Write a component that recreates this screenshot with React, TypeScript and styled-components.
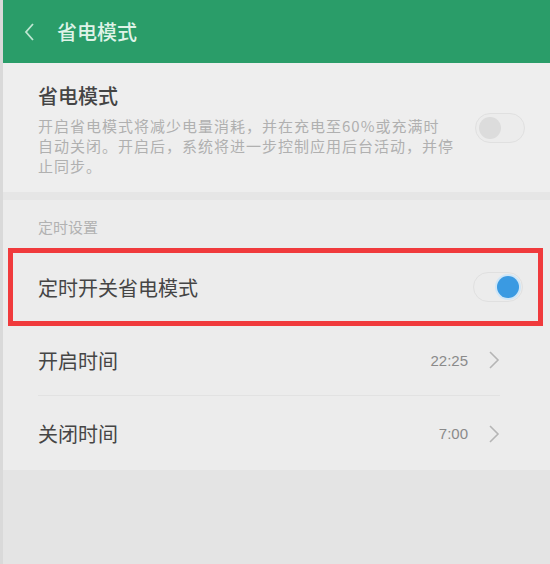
import styled, { createGlobalStyle } from 'styled-components';

const GlobalStyle = createGlobalStyle`
    html, body {
        margin: 0;
        padding: 0;
        background: #e4e4e4;
    }
    body {
        font-family: "Noto Sans CJK SC", "Noto Sans", sans-serif;
    }
`;

const Switch = ({ on }: { on: boolean }) => (
    <Style.Track $on={on}>
        <Style.Knob $on={on} />
    </Style.Track>
);

const Chevron = () => (
    <svg width="12" height="20" viewBox="0 0 12 20">
        <polyline points="2,2 10,10 2,18" fill="none" stroke="#b5b5b5" strokeWidth="1.6" />
    </svg>
);

const App = () => {
    return (
        <Style.Page>
            <GlobalStyle />
            <Style.Header>
                <svg width="14" height="20" viewBox="0 0 14 20">
                    <polyline points="10,2 3,10 10,18" fill="none" stroke="#bfe6d2" strokeWidth="1.8" />
                </svg>
                <Style.HeaderTitle>省电模式</Style.HeaderTitle>
            </Style.Header>

            <Style.Card>
                <Style.CardText>
                    <Style.CardTitle>省电模式</Style.CardTitle>
                    <Style.Description>
                        开启省电模式将减少电量消耗，并在充电至60%或充满时
                        <br />
                        自动关闭。开启后，系统将进一步控制应用后台活动，并停
                        <br />
                        止同步。
                    </Style.Description>
                </Style.CardText>
                <Switch on={false} />
            </Style.Card>

            <Style.Section>
                <Style.SectionLabel>定时设置</Style.SectionLabel>
                <Style.Highlight>
                    <Style.RowTitle>定时开关省电模式</Style.RowTitle>
                    <Switch on />
                </Style.Highlight>
                <Style.Row $divider>
                    <Style.RowTitle>开启时间</Style.RowTitle>
                    <Style.Value>22:25</Style.Value>
                    <Chevron />
                </Style.Row>
                <Style.Row>
                    <Style.RowTitle>关闭时间</Style.RowTitle>
                    <Style.Value>7:00</Style.Value>
                    <Chevron />
                </Style.Row>
            </Style.Section>
        </Style.Page>
    );
};

const Style = {
    Page: styled.div`
        width: 550px;
        height: 564px;
        background: #e4e4e4;
        border-left: 3px solid #d9d9d9;
        box-sizing: border-box;
        overflow: hidden;
    `,
    Header: styled.div`
        height: 63px;
        background: #2a9d69;
        display: flex;
        align-items: center;
        padding-left: 20px;
        gap: 20px;
        box-shadow: 0 1px 0 #8fdcb7;
    `,
    HeaderTitle: styled.span`
        font-size: 20px;
        color: #dff3e8;
        font-weight: 500;
    `,
    Card: styled.div`
        height: 137px;
        background: #eeeeee;
        display: flex;
        align-items: center;
        justify-content: space-between;
        padding: 0 25px 0 35px;
        box-sizing: border-box;
        border-bottom: 8px solid #e6e6e6;
    `,
    CardText: styled.div`
        display: flex;
        flex-direction: column;
        padding-top: 2px;
    `,
    CardTitle: styled.div`
        font-size: 20px;
        font-weight: 500;
        color: #444444;
        line-height: 28px;
        margin-bottom: 6px;
    `,
    Description: styled.div`
        font-size: 15px;
        letter-spacing: 1px;
        color: #b0b0b0;
        line-height: 20px;
        white-space: nowrap;
    `,
    Section: styled.div`
        background: #ececec;
        height: 270px;
        display: flex;
        flex-direction: column;
    `,
    SectionLabel: styled.div`
        height: 49px;
        display: flex;
        align-items: center;
        padding-left: 35px;
        padding-top: 5px;
        box-sizing: border-box;
        font-size: 15px;
        color: #b2b2b2;
    `,
    Highlight: styled.div`
        height: 78px;
        margin: 0 7px 0 5px;
        border: 5px solid #f03a3c;
        box-sizing: border-box;
        display: flex;
        align-items: center;
        justify-content: space-between;
        padding: 0 15px 0 25px;
    `,
    Row: styled.div<{ $divider?: boolean }>`
        height: ${(p) => (p.$divider ? '70px' : '73px')};
        margin: 0 50px 0 35px;
        display: flex;
        align-items: center;
        gap: 18px;
        border-bottom: ${(p) => (p.$divider ? '1px solid #e2e2e2' : 'none')};
        padding-top: ${(p) => (p.$divider ? '0' : '2px')};
    `,
    RowTitle: styled.div`
        font-size: 20px;
        color: #454545;
        flex: 1;
    `,
    Value: styled.span`
        font-family: "Liberation Sans", sans-serif;
        font-size: 15px;
        color: #8a8a8a;
        margin-right: 2px;
    `,
    Track: styled.div<{ $on: boolean }>`
        width: 50px;
        height: 30px;
        border-radius: 15px;
        border: 1px solid #e0e0e0;
        background: #ececec;
        box-sizing: border-box;
        display: flex;
        align-items: center;
        justify-content: ${(p) => (p.$on ? 'flex-end' : 'flex-start')};
        padding: 0 3px;
    `,
    Knob: styled.div<{ $on: boolean }>`
        width: 22px;
        height: 22px;
        border-radius: 50%;
        background: ${(p) => (p.$on ? '#3a9ae2' : '#dcdcdc')};
        box-shadow: ${(p) => (p.$on ? '0 0 0 2px #cfe6f7' : 'none')};
    `,
};

export default App;
